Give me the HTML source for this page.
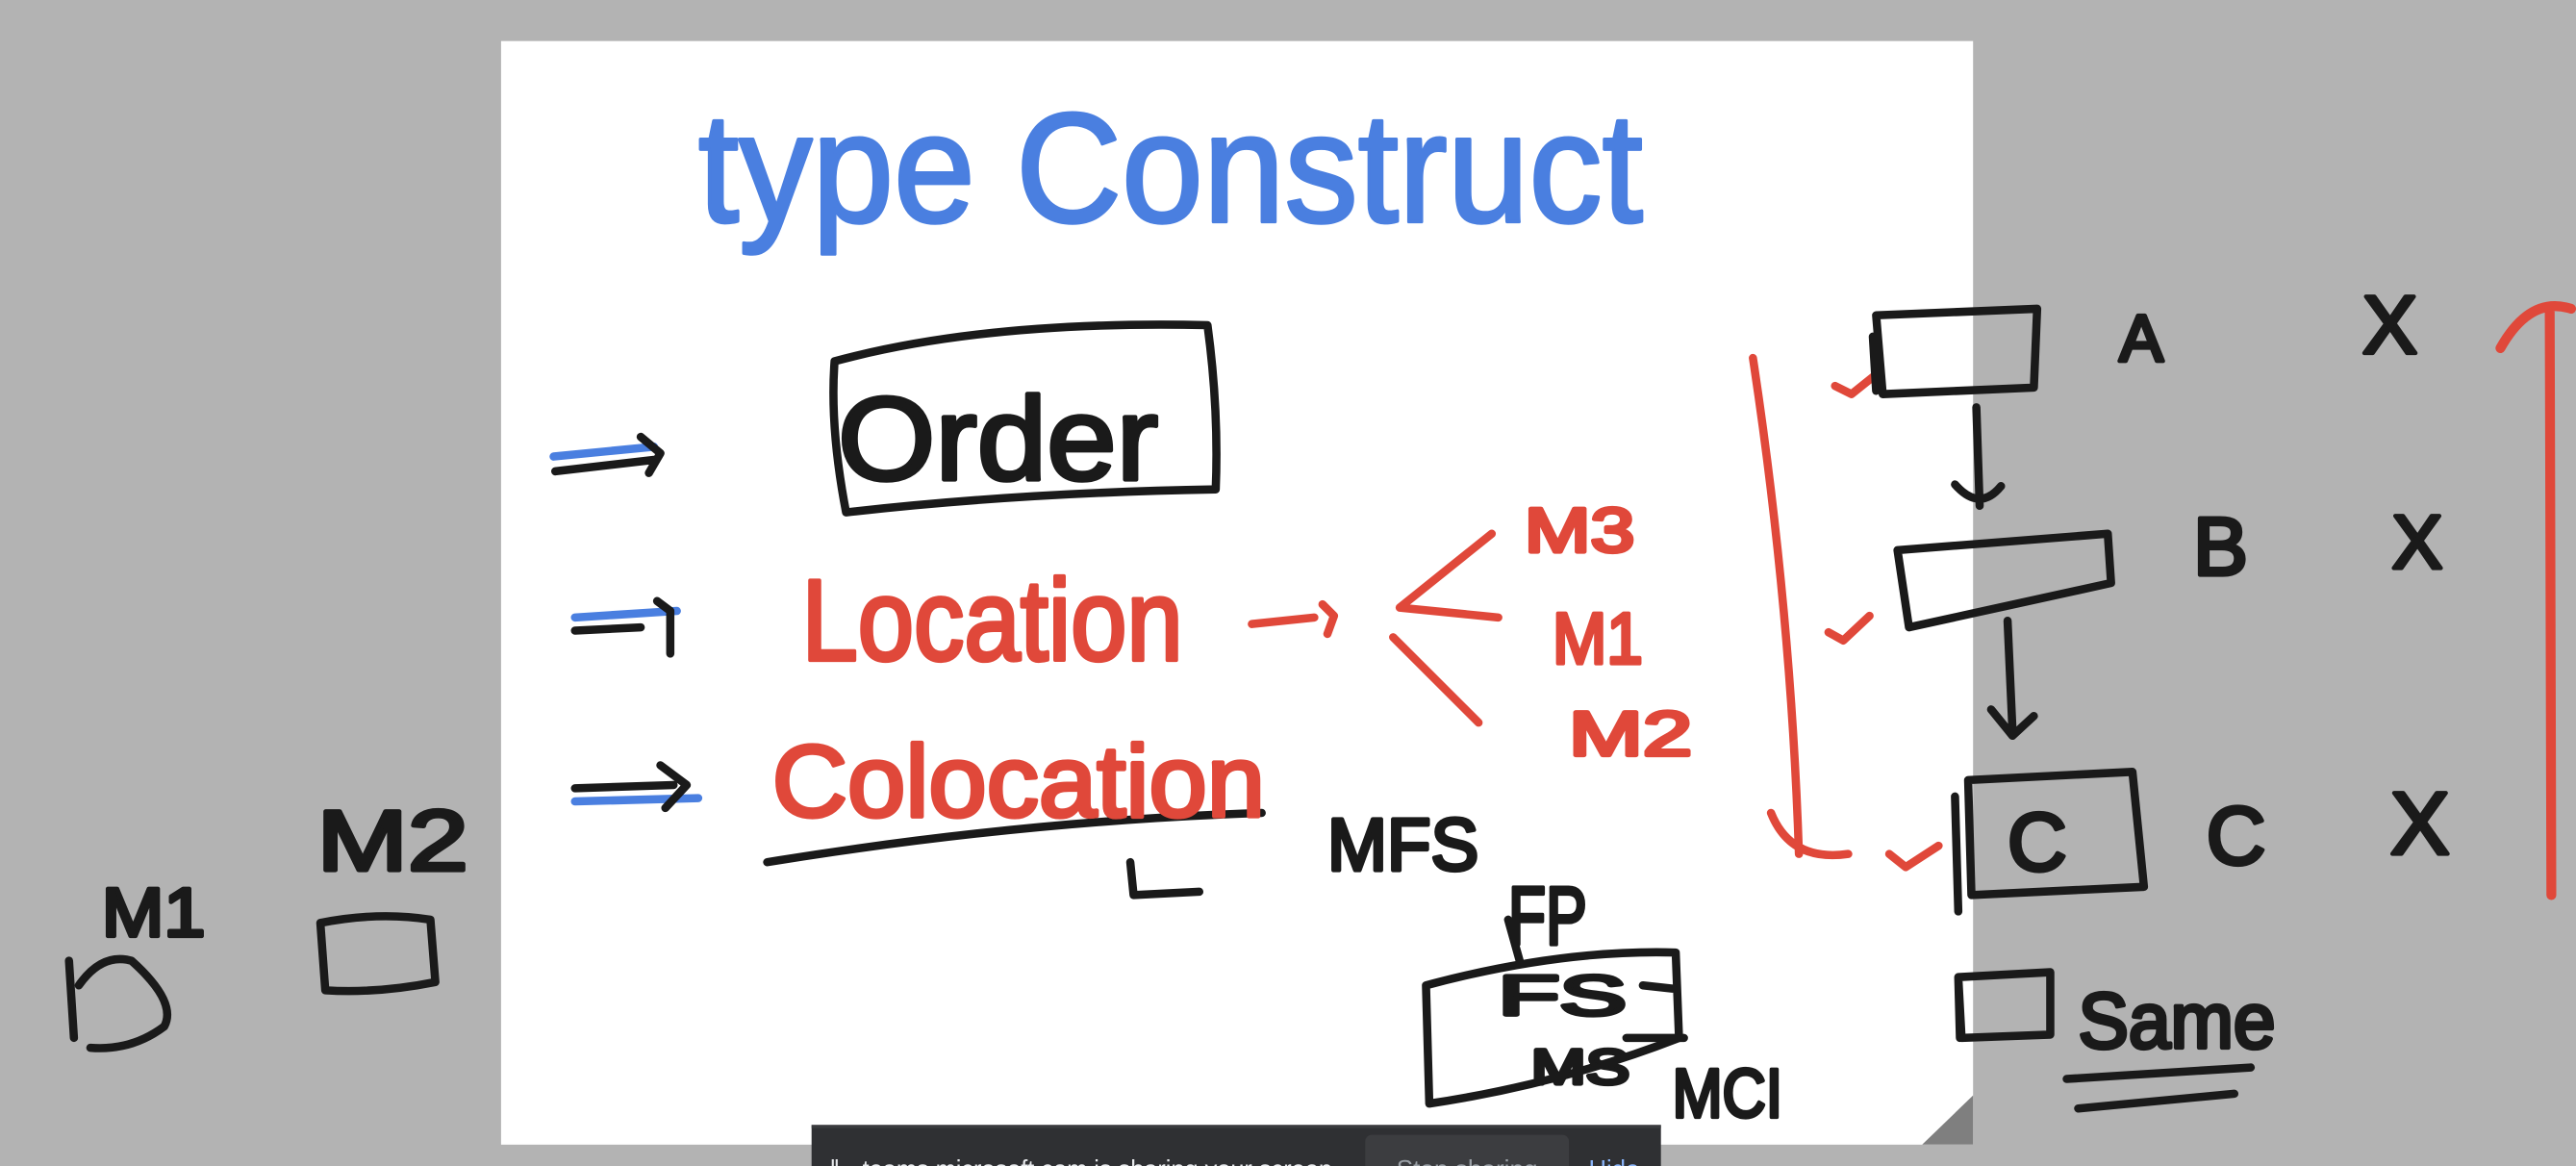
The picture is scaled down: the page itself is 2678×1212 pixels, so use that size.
<!DOCTYPE html>
<html><head><meta charset="utf-8"><style>
html,body{margin:0;padding:0;background:#b3b3b3;overflow:hidden}
svg{display:block}
text{font-family:"Liberation Sans",sans-serif}
.hw{stroke-linejoin:round}
</style></head><body>
<svg width="2678" height="1212" viewBox="0 0 1568 710" preserveAspectRatio="none" xmlns="http://www.w3.org/2000/svg">
<rect width="1568" height="710" fill="#b3b3b3"/>
<rect x="305" y="25" width="896" height="672" fill="#ffffff"/>
<polygon points="1170,697 1201,667 1201,697" fill="#7f7f7f"/>

<text class="hw" x="425" y="135" font-size="95" fill="#4a7fe0" stroke="#4a7fe0" stroke-width="2" textLength="575" lengthAdjust="spacingAndGlyphs">type  Construct</text>

<g fill="none" stroke-linecap="round" stroke-linejoin="round">
<path d="M508,220 Q600,195 735,198 Q742,250 740,298 Q620,300 515,312 Q505,260 508,220Z" stroke="#1a1a1a" stroke-width="5"/>
<path d="M337,278 L398,272" stroke="#4a7fe0" stroke-width="5"/>
<path d="M338,287 L398,280 M390,266 L402,276 L395,288" stroke="#1a1a1a" stroke-width="5"/>
<path d="M350,376 L412,372" stroke="#4a7fe0" stroke-width="5"/>
<path d="M350,384 L390,382 M400,366 L408,372 L408,398" stroke="#1a1a1a" stroke-width="5"/>
<path d="M350,488 L425,486" stroke="#4a7fe0" stroke-width="5"/>
<path d="M350,480 L410,478 M402,466 L418,478 L405,492" stroke="#1a1a1a" stroke-width="5"/>
<path d="M762,380 L800,376 M805,368 L812,375 L808,386" stroke="#e0483a" stroke-width="5"/>
<path d="M908,325 L852,370 L912,376 M848,388 L900,440" stroke="#e0483a" stroke-width="5"/>
<path d="M467,525 Q620,500 768,495" stroke="#1a1a1a" stroke-width="5"/>
<path d="M688,525 L690,545 L730,543" stroke="#1a1a1a" stroke-width="5"/>
<path d="M868,600 Q950,578 1020,580 L1022,632 Q950,660 870,672 Z" stroke="#1a1a1a" stroke-width="5"/>
<path d="M918,560 L925,585 M1000,600 L1018,602 M990,632 L1025,632" stroke="#1a1a1a" stroke-width="5"/>
<path d="M42,585 L45,632 M48,600 Q62,580 80,585 Q108,610 100,625 Q80,640 55,638" stroke="#1a1a1a" stroke-width="5"/>
<path d="M195,562 Q230,555 262,560 L265,598 Q230,605 198,603 Z" stroke="#1a1a1a" stroke-width="5"/>
<path d="M1067,218 Q1090,370 1095,520 M1078,495 Q1090,525 1125,520" stroke="#e0483a" stroke-width="5"/>
<path d="M1117,235 L1127,240 L1142,228" stroke="#e0483a" stroke-width="5"/>
<path d="M1113,385 L1122,390 L1138,375" stroke="#e0483a" stroke-width="5"/>
<path d="M1150,520 L1160,528 L1180,515" stroke="#e0483a" stroke-width="5"/>
<path d="M1142,192 L1240,188 L1238,236 L1146,240 Z M1140,205 L1142,238" stroke="#1a1a1a" stroke-width="5"/>
<path d="M1203,248 L1205,308 M1190,295 Q1205,312 1218,296" stroke="#1a1a1a" stroke-width="5"/>
<path d="M1155,335 L1283,325 L1285,355 L1162,382 Z" stroke="#1a1a1a" stroke-width="5"/>
<path d="M1222,378 L1225,445 M1212,432 L1225,448 L1238,436" stroke="#1a1a1a" stroke-width="5"/>
<path d="M1198,475 L1298,470 L1305,540 L1200,545 Z M1190,485 L1192,555" stroke="#1a1a1a" stroke-width="5"/>
<path d="M1553,545 L1552,190 M1522,212 Q1540,180 1565,188" stroke="#e0483a" stroke-width="6"/>
<path d="M1192,595 L1248,592 L1248,630 L1194,632 Z M1192,595 L1193,632" stroke="#1a1a1a" stroke-width="5"/>
<path d="M1258,657 L1370,650 M1265,675 L1360,666" stroke="#1a1a1a" stroke-width="5"/>
</g>

<g class="hw" stroke-width="2.5">
<text x="510" y="292" font-size="72" fill="#1a1a1a" stroke="#1a1a1a" textLength="195" lengthAdjust="spacingAndGlyphs">Order</text>
<text x="488" y="402" font-size="70" fill="#e0483a" stroke="#e0483a" textLength="232" lengthAdjust="spacingAndGlyphs">Location</text>
<text x="470" y="497" font-size="62" fill="#e0483a" stroke="#e0483a" textLength="300" lengthAdjust="spacingAndGlyphs">Colocation</text>
<text x="928" y="336" font-size="38" fill="#e0483a" stroke="#e0483a" textLength="67" lengthAdjust="spacingAndGlyphs">M3</text>
<text x="945" y="404" font-size="44" fill="#e0483a" stroke="#e0483a" textLength="55" lengthAdjust="spacingAndGlyphs">M1</text>
<text x="955" y="460" font-size="38" fill="#e0483a" stroke="#e0483a" textLength="75" lengthAdjust="spacingAndGlyphs">M2</text>
<text x="808" y="530" font-size="45" fill="#1a1a1a" stroke="#1a1a1a" textLength="92" lengthAdjust="spacingAndGlyphs">MFS</text>
<text x="918" y="575" font-size="50" fill="#1a1a1a" stroke="#1a1a1a" textLength="48" lengthAdjust="spacingAndGlyphs">FP</text>
<text x="912" y="618" font-size="34" fill="#1a1a1a" stroke="#1a1a1a" textLength="78" lengthAdjust="spacingAndGlyphs">FS</text>
<text x="932" y="660" font-size="30" fill="#1a1a1a" stroke="#1a1a1a" textLength="60" lengthAdjust="spacingAndGlyphs">MS</text>
<text x="1018" y="680" font-size="42" fill="#1a1a1a" stroke="#1a1a1a" textLength="67" lengthAdjust="spacingAndGlyphs">MCI</text>
<text x="62" y="570" font-size="42" fill="#1a1a1a" stroke="#1a1a1a" textLength="63" lengthAdjust="spacingAndGlyphs">M1</text>
<text x="193" y="530" font-size="52" fill="#1a1a1a" stroke="#1a1a1a" textLength="92" lengthAdjust="spacingAndGlyphs">M2</text>
<text x="1290" y="220" font-size="40" fill="#1a1a1a" stroke="#1a1a1a">A</text>
<text x="1438" y="215" font-size="50" fill="#1a1a1a" stroke="#1a1a1a">X</text>
<text x="1335" y="350" font-size="50" fill="#1a1a1a" stroke="#1a1a1a">B</text>
<text x="1456" y="346" font-size="46" fill="#1a1a1a" stroke="#1a1a1a">X</text>
<text x="1222" y="530" font-size="50" fill="#1a1a1a" stroke="#1a1a1a">C</text>
<text x="1343" y="526" font-size="50" fill="#1a1a1a" stroke="#1a1a1a">C</text>
<text x="1455" y="520" font-size="54" fill="#1a1a1a" stroke="#1a1a1a">X</text>
<text x="1265" y="638" font-size="48" fill="#1a1a1a" stroke="#1a1a1a" textLength="120" lengthAdjust="spacingAndGlyphs">Same</text>
</g>

<rect x="494" y="685" width="517" height="30" fill="#2f3033"/>
<rect x="494" y="685" width="517" height="2" fill="#3a3b3e"/>
<rect x="831" y="691" width="124" height="30" rx="4" fill="#3c3d40"/>
<text x="505" y="717" font-size="15" fill="#e8eaed">‖</text>
<text x="525" y="717" font-size="15" fill="#e8eaed" textLength="290" lengthAdjust="spacingAndGlyphs">teams.microsoft.com is sharing your screen.</text>
<text x="850" y="717" font-size="15" fill="#9aa0a6" textLength="86" lengthAdjust="spacingAndGlyphs">Stop sharing</text>
<text x="967" y="717" font-size="15" fill="#8ab4f8">Hide</text>
</svg>
</body></html>
